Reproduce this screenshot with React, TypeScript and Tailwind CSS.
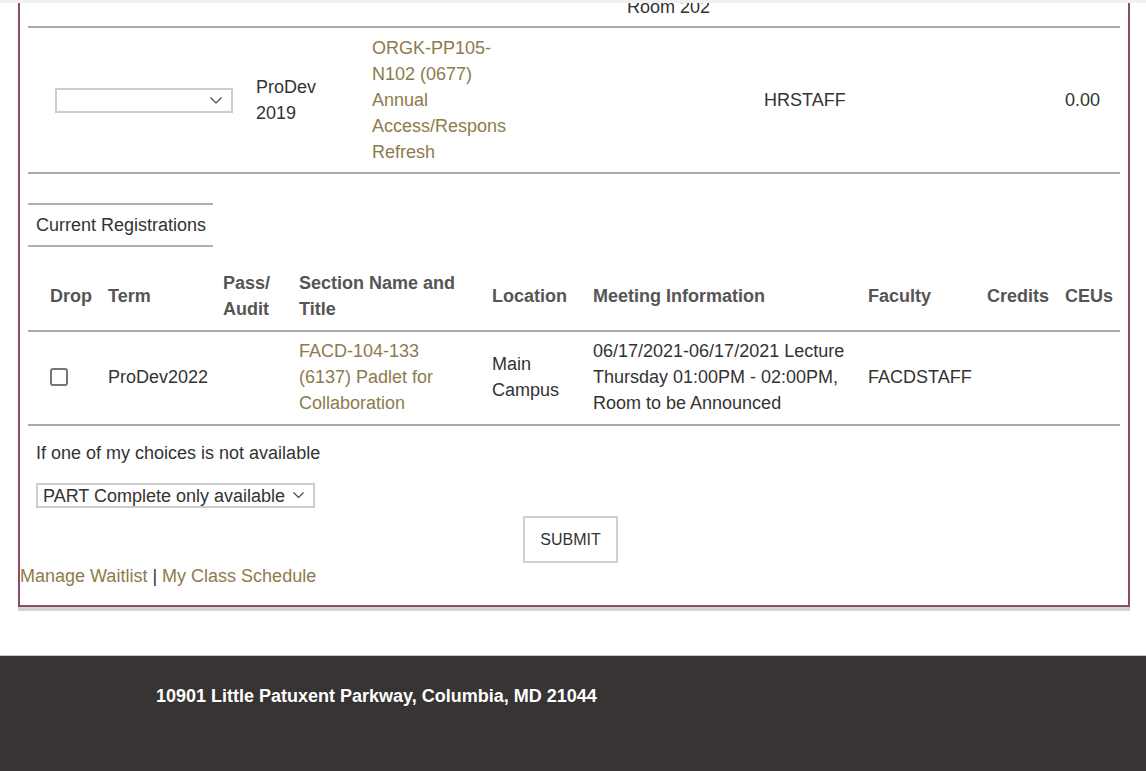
import React from 'react'

const cols = 'grid grid-cols-[72px_115px_76px_193px_101px_275px_119px_78px_63px]'

function Chevron({ w = 12 }: { w?: number }) {
  return (
    <svg width={w} height={w / 2 + 1} viewBox={`0 0 ${w} ${w / 2 + 1}`} fill="none">
      <path d={`M0.5 0.5L${w / 2} ${w / 2}L${w - 0.5} 0.5`} stroke="#444" strokeWidth="1.2" />
    </svg>
  )
}

function Rule() {
  return <div className="h-[2px] bg-[#a9a9a9]" />
}

export default function App() {
  return (
    <div className="w-[1146px] h-[771px] overflow-hidden bg-white flex flex-col text-[18px] leading-[26px] text-[#333] font-['Liberation_Sans',Arial,sans-serif]">
      <div className="h-[3px] bg-[#f1f1f1] shrink-0" />

      {/* registration box */}
      <div className="ml-[18px] w-[1112px] shrink-0 border-x-2 border-b-2 border-[#8e4a6a] shadow-[0_4px_0_#d3d3d3]">
        <div className="px-2">
          <div className="h-[23px] overflow-hidden">
            <div className="-mt-[9px] pl-[599px]">Room 202</div>
          </div>
          <Rule />

          {/* pending row */}
          <div className="grid grid-cols-[220px_116px_160px_232px_244px_120px] items-center py-[7px]">
            <div>
              <div className="ml-[27px] w-[178px] h-[25px] border-2 border-[#cdcdcd] flex items-center justify-end pr-[9px]">
                <Chevron />
              </div>
            </div>
            <div className="pl-2">
              ProDev
              <br />
              2019
            </div>
            <div className="pl-2 text-[#8d7b4c]">
              ORGK-PP105-
              <br />
              N102 (0677)
              <br />
              Annual
              <br />
              Access/Respons
              <br />
              Refresh
            </div>
            <div />
            <div className="pl-2">HRSTAFF</div>
            <div className="text-right pr-5">0.00</div>
          </div>
          <Rule />

          {/* tab */}
          <div className="mt-[29px] w-[185px] h-[44px] border-y-2 border-[#b0b0b0] flex items-center pl-2">
            Current Registrations
          </div>

          {/* header */}
          <div className={`${cols} items-center pt-[23px] pb-2 font-bold text-[#555]`}>
            <div className="pl-[22px]">Drop</div>
            <div className="pl-2">Term</div>
            <div className="pl-2">
              Pass/
              <br />
              Audit
            </div>
            <div className="pl-2">
              Section Name and
              <br />
              Title
            </div>
            <div className="pl-2">Location</div>
            <div className="pl-2">Meeting Information</div>
            <div className="pl-2">Faculty</div>
            <div className="pl-2">Credits</div>
            <div className="pl-2">CEUs</div>
          </div>
          <Rule />

          {/* current row */}
          <div className={`${cols} items-center pt-[6px] pb-2`}>
            <div className="pl-[22px]">
              <div className="w-[18px] h-[18px] border-2 border-[#767676] rounded-[3px]" />
            </div>
            <div className="pl-2">ProDev2022</div>
            <div />
            <div className="pl-2 text-[#8d7b4c]">
              FACD-104-133
              <br />
              (6137) Padlet for
              <br />
              Collaboration
            </div>
            <div className="pl-2">
              Main
              <br />
              Campus
            </div>
            <div className="pl-2">
              06/17/2021-06/17/2021 Lecture
              <br />
              Thursday 01:00PM - 02:00PM,
              <br />
              Room to be Announced
            </div>
            <div className="pl-2">FACDSTAFF</div>
            <div />
            <div />
          </div>
          <Rule />

          <div className="mt-[14px] pl-2">If one of my choices is not available</div>

          <div className="mt-[17px] ml-2 w-[279px] h-[25px] border-2 border-[#cdcdcd] flex items-center justify-between pl-[5px] pr-[9px]">
            <span>PART Complete only available</span>
            <Chevron w={11} />
          </div>

          <button className="mt-[8px] ml-[495px] w-[95px] h-[47px] border-2 border-[#d0d0d0] bg-white text-[16px] text-[#333] block">
            SUBMIT
          </button>

          <div className="-ml-2 pb-[16px]">
            <span className="text-[#8d7b4c]">Manage Waitlist</span> |{' '}
            <span className="text-[#8d7b4c]">My Class Schedule</span>
          </div>
        </div>
      </div>

      {/* footer */}
      <div className="mt-[48px] flex-1 border-t border-[#c9c9c9] bg-[#383434] pl-[156px] pt-[27px]">
        <div className="font-bold text-white">10901 Little Patuxent Parkway, Columbia, MD 21044</div>
      </div>
    </div>
  )
}
